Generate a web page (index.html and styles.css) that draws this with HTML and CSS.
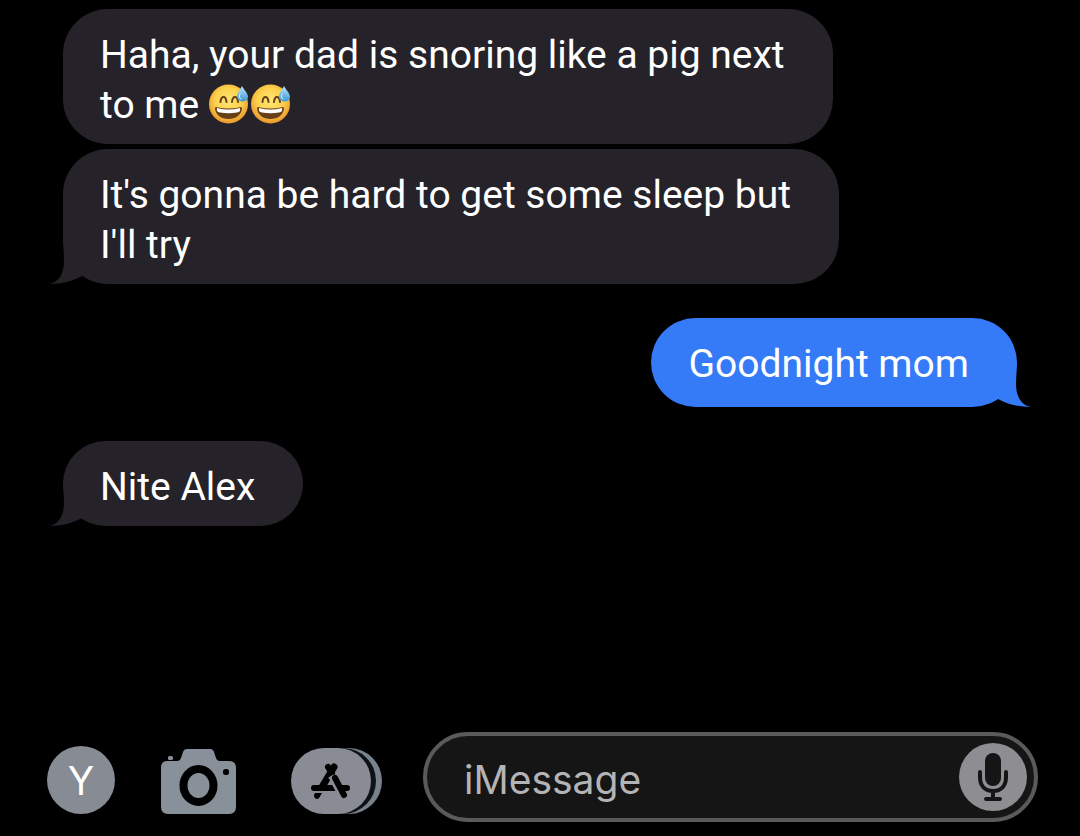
FILE: index.html
```html
<!DOCTYPE html>
<html lang="en">
<head>
<meta charset="UTF-8">
<meta name="viewport" content="width=device-width, initial-scale=1.0">
<title>Messages</title>
<link rel="stylesheet" href="styles.css">
</head>
<body>

<svg class="defs" aria-hidden="true">
  <defs>
    <radialGradient id="face" cx="50%" cy="42%" r="58%">
      <stop offset="0" stop-color="#ffe674"/>
      <stop offset="0.6" stop-color="#fcd04b"/>
      <stop offset="1" stop-color="#e8952c"/>
    </radialGradient>
    <linearGradient id="drop" x1="0" y1="0" x2="0" y2="1">
      <stop offset="0" stop-color="#bfe6f8"/>
      <stop offset="1" stop-color="#3b98d6"/>
    </linearGradient>
    <symbol id="sweat" viewBox="0 0 40 40">
      <circle cx="19.500" cy="20" r="19.500" fill="url(#face)"/>
      <path d="M11.500 18q0.500-5 3-5t3 5M23 18q0.500-5 3-5t3 5" fill="none" stroke="#67401a" stroke-width="2" stroke-linecap="round"/>
      <path d="M7 23q12.500 3 25 0q1 0 1 2c-1 6-6 10-13.500 10S7 31 6 25q0-2 1-2z" fill="#67401a"/>
      <path d="M8 24q11.500 3 23 0q1 4-3 4.500q-8.500 1.500-17 0q-4-0.500-3-4.500z" fill="#fff"/>
      <path d="M33 2c-2 4-5 7-5 10a5.500 5 0 0 0 11 1c0-4-4-7-6-11z" fill="url(#drop)"/>
      <path d="M31 10q-2 4 1 5" fill="none" stroke="#e3f6ff" stroke-width="1" stroke-linecap="round"/>
    </symbol>
    <symbol id="tail" viewBox="0 0 34 46">
      <path d="M14 0L15 22C15 36 10 44 0 46C13 46 24 43 33 38L34 0z" fill="currentColor"/>
    </symbol>
  </defs>
</svg>

<main class="chat">
  <div class="bubble received">Haha, your dad is snoring like a pig next<br>to me <svg class="emoji" role="img" aria-label="😅"><use href="#sweat"/></svg><svg class="emoji" role="img" aria-label="😅"><use href="#sweat"/></svg></div>
  <div class="bubble received last">It's gonna be hard to get some sleep but<br>I'll try<svg class="tail"><use href="#tail"/></svg></div>
  <div class="bubble sent last">Goodnight mom<svg class="tail"><use href="#tail"/></svg></div>
  <div class="bubble received last">Nite Alex<svg class="tail"><use href="#tail"/></svg></div>
</main>

<form class="composer">
  <div class="tools">
    <button type="button" class="avatar">Y</button>
    <button type="button" class="camera" aria-label="Camera">
      <svg width="75" height="65" viewBox="0 0 75 65">
        <path d="M6 12H16Q19 12 20 9L22 3Q23 0 26 0H49Q52 0 53 3L55 9Q56 12 59 12H68Q75 12 75 19V58Q75 65 68 65H7Q0 65 0 58V19Q0 12 6 12z" fill="#88909a"/>
        <rect x="7" y="7" width="5" height="4" rx="1.500" fill="#88909a"/>
        <ellipse cx="37.500" cy="36.500" rx="15" ry="16.500" fill="#88909a" stroke="#000" stroke-width="8"/>
        <rect x="62" y="20" width="6" height="6" rx="2.500" fill="#000"/>
      </svg>
    </button>
    <button type="button" class="apps" aria-label="Apps">
      <svg width="91" height="66" viewBox="0 0 91 66">
        <path d="M58 0a33 33 0 0 1 0 66H44V0z" fill="#77828a"/>
        <path d="M52 0a33 33 0 0 1 0 66H40V0z" fill="#0d1216"/>
        <rect width="80" height="66" rx="33" fill="#898c95"/>
        <g fill="none" stroke="#000" stroke-width="6" stroke-linecap="round">
          <path d="M23 40H44"/>
          <path d="M43 19L31 39" stroke-width="7"/>
          <path d="M37 19L41 25"/>
          <path d="M40 28L51 49" stroke="#898c95" stroke-linecap="butt"/>
          <path d="M44 30L53 47M51 40H56"/>
        </g>
        <path d="M24 45H31L28 50Q26 52 24 50T24 45z"/>
      </svg>
    </button>
  </div>
  <div class="field">
    <input type="text" placeholder="iMessage" aria-label="iMessage">
    <button type="button" class="mic" aria-label="Dictate">
      <svg width="68" height="68" viewBox="0 0 68 68">
        <rect x="26" y="10" width="16" height="33" rx="8" fill="#151515"/>
        <path d="M21 29V34C21 43 26 48 34 48S47 43 47 34V29M34 48V55M27 56H41" fill="none" stroke="#151515" stroke-width="4" stroke-linecap="round"/>
      </svg>
    </button>
  </div>
</form>

</body>
</html>
```
FILE: styles.css
```css
* {
  box-sizing: border-box;
}
body {
  margin: 0;
  min-height: 100vh;
  display: flex;
  flex-direction: column;
  background: #000;
  color: #fff;
  font-family: Roboto, "Liberation Sans", sans-serif;
  font-size: 39px;
}
.defs {
  position: absolute;
  width: 0;
  height: 0;
}
.chat {
  flex: 1;
  display: flex;
  flex-direction: column;
  align-items: flex-start;
  padding: 9px 63px;
}
.bubble {
  position: relative;
  padding: 21px 48px 14px 37px;
  border-radius: 45px;
  line-height: 50px;
  white-space: nowrap;
}
.received {
  background: #252329;
  color: #fff;
  margin-bottom: 5px;
}
.received.last {
  margin-bottom: 34px;
}
.sent {
  align-self: flex-end;
  background: #357af6;
  margin-bottom: 34px;
  padding: 21px 48px 18px 37px;
}
.tail {
  position: absolute;
  left: -14px;
  bottom: 0;
  width: 34px;
  height: 46px;
  color: #252329;
}
.sent .tail {
  left: auto;
  right: -14px;
  color: #357af6;
  transform: scaleX(-1);
}
.emoji {
  width: 40px;
  height: 40px;
  margin-right: 2px;
  vertical-align: -6px;
}
.composer {
  display: flex;
  align-items: center;
  padding: 0 42px 14px 47px;
  font-family: Inter, "Liberation Sans", sans-serif;
}
.tools {
  display: flex;
  align-items: flex-end;
  padding-top: 6px;
}
button {
  display: block;
  flex: none;
  padding: 0;
  border: none;
  background: none;
  font: inherit;
  color: #fff;
  cursor: pointer;
}
button svg {
  display: block;
}
.avatar {
  width: 68px;
  height: 68px;
  border-radius: 50%;
  background: #868b94;
}
.camera {
  margin-left: 46px;
}
.apps {
  margin: 0 41px 0 55px;
}
.field {
  flex: 1;
  display: flex;
  align-items: center;
  min-width: 0;
  height: 90px;
  padding: 0 7px 0 37px;
  border: 4px solid #5a5a5c;
  border-radius: 45px;
  background: #151515;
}
.field input {
  flex: 1;
  min-width: 0;
  padding: 4px 0 0;
  border: none;
  outline: none;
  background: none;
  color: #fff;
  font: inherit;
}
.field input::placeholder {
  color: #b4b4b6;
  opacity: 1;
}
.mic {
  border-radius: 50%;
  background: #8e8d92;
}
```
